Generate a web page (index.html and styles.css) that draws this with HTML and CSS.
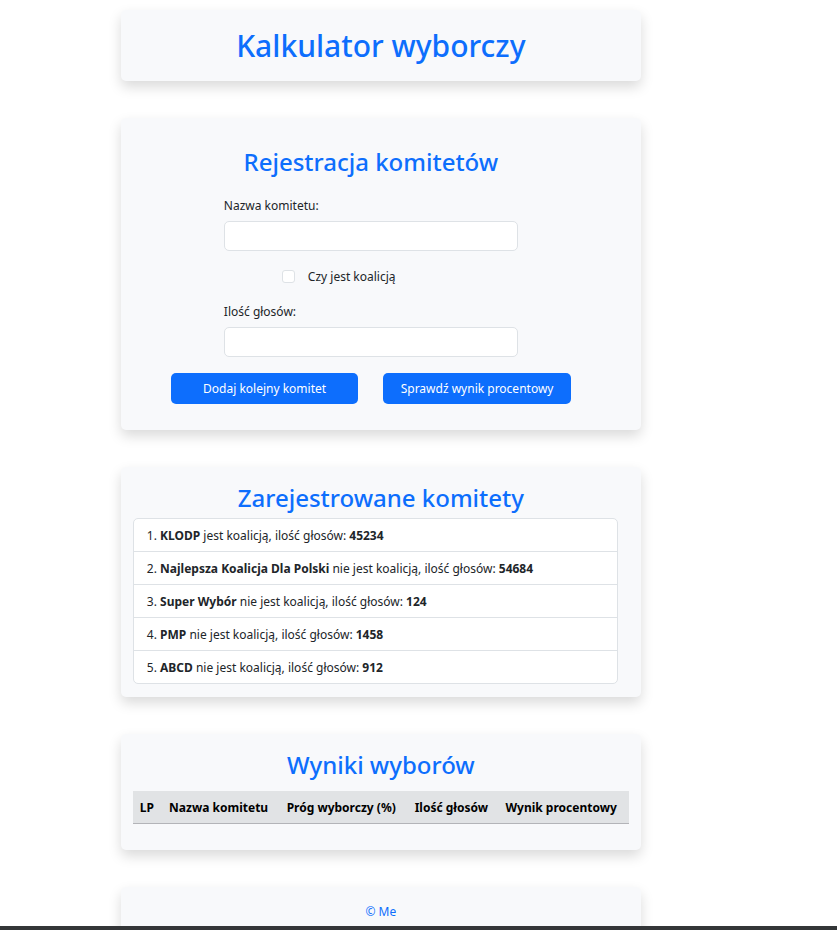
FILE: index.html
```html
<!DOCTYPE html>
<html lang="pl">
<head>
<meta charset="utf-8">
<meta name="viewport" content="width=device-width, initial-scale=1">
<title>Kalkulator wyborczy</title>
<link rel="stylesheet" href="styles.css">
</head>
<body>
<div class="viewport">
  <div class="page">
    <header class="card card-title">
      <h1>Kalkulator wyborczy</h1>
    </header>
    <main class="sections">
      <section class="card card-form">
        <h2>Rejestracja komitetów</h2>
        <form class="form">
          <div class="field">
            <label for="name">Nazwa komitetu:</label>
            <input class="control" type="text" id="name">
          </div>
          <div class="check">
            <input type="checkbox" id="coalition">
            <label for="coalition">Czy jest koalicją</label>
          </div>
          <div class="field">
            <label for="votes">Ilość głosów:</label>
            <input class="control" type="text" id="votes">
          </div>
          <div class="actions">
            <button type="button">Dodaj kolejny komitet</button>
            <button type="button">Sprawdź wynik procentowy</button>
          </div>
        </form>
      </section>
      <section class="card card-list">
        <h2>Zarejestrowane komitety</h2>
        <ol class="list">
          <li><strong>KLODP</strong> jest koalicją, ilość głosów: <strong>45234</strong></li>
          <li><strong>Najlepsza Koalicja Dla Polski</strong> nie jest koalicją, ilość głosów: <strong>54684</strong></li>
          <li><strong>Super Wybór</strong> nie jest koalicją, ilość głosów: <strong>124</strong></li>
          <li><strong>PMP</strong> nie jest koalicją, ilość głosów: <strong>1458</strong></li>
          <li><strong>ABCD</strong> nie jest koalicją, ilość głosów: <strong>912</strong></li>
        </ol>
      </section>
      <section class="card card-results">
        <h2>Wyniki wyborów</h2>
        <table>
          <thead>
            <tr><th>LP</th><th>Nazwa komitetu</th><th>Próg wyborczy (%)</th><th>Ilość głosów</th><th>Wynik procentowy</th></tr>
          </thead>
        </table>
      </section>
    </main>
    <footer class="card card-footer">© Me</footer>
  </div>
</div>
<div class="bottom-bar"></div>
</body>
</html>
```
FILE: styles.css
```css
* { box-sizing: border-box; }

body {
  margin: 0;
  height: 100vh;
  display: flex;
  flex-direction: column;
  background: #fff;
  color: #212529;
  font-family: "Segoe UI", "Noto Sans", sans-serif;
  font-size: 12px;
  line-height: 20px;
}

.viewport {
  flex: 1;
  min-height: 0;
  overflow-y: auto;
  scrollbar-width: none;
}

.bottom-bar {
  height: 4px;
  background: #343638;
}

.page {
  width: 91%;
  padding: 10px 0;
}

.page,
.sections {
  display: flex;
  flex-direction: column;
  align-items: center;
  gap: 37px;
}

.sections { width: 100%; }

.card {
  width: 100%;
  max-width: 520px;
  padding: 13px 12px;
  border-radius: 5px;
  background: #f8f9fb;
  box-shadow: 0 6px 13px rgba(0, 0, 0, 0.15);
}

h1,
h2 {
  margin: 0;
  color: #0d6efd;
  font-weight: 500;
  text-align: center;
}

h1 {
  font-size: 30px;
  line-height: 45px;
}

h2 {
  font-size: 24px;
  line-height: 36px;
}

.card-form { padding: 26px 32px 26px 12px; }

.form {
  display: flex;
  flex-direction: column;
  align-items: center;
  gap: 16px;
  padding: 16px 38px 0;
}

.field {
  display: flex;
  flex-direction: column;
  gap: 5px;
  width: 100%;
  max-width: 294px;
}

.control {
  width: 100%;
  height: 30px;
  padding: 5px 10px;
  border: 1px solid #dee2e6;
  border-radius: 5px;
  background: #fff;
  font: inherit;
}

.check {
  display: flex;
  align-items: center;
  gap: 13px;
  width: 100%;
  max-width: 178px;
}

.check label { line-height: 19px; }

.check input {
  appearance: none;
  width: 13px;
  height: 13px;
  margin: 0;
  border: 1px solid #dee2e6;
  border-radius: 3px;
  background: #fff;
}

.check input:checked { background: #0d6efd; }

.actions {
  display: flex;
  gap: 25px;
  width: 100%;
}

button {
  flex: 1;
  padding: 6px 10px 5px;
  border: 0;
  border-radius: 5px;
  background: #0d6efd;
  color: #fff;
  font: inherit;
  white-space: nowrap;
}

.list {
  margin: 2px 11px 0 0;
  padding: 0;
  list-style: none;
  counter-reset: item;
  border: 1px solid #dee2e6;
  border-radius: 5px;
  background: #fff;
}

.list li {
  padding: 7px 13px 5px;
  counter-increment: item;
}

.list li + li { border-top: 1px solid #dee2e6; }

.list li::before { content: counter(item) ". "; }

.card-results { padding-bottom: 26px; }

table {
  width: 100%;
  margin-top: 8px;
  border-collapse: collapse;
}

th {
  padding: 7px 7px 5px;
  border-bottom: 1px solid #b3b4b8;
  background: #e1e3e5;
  color: #000;
  text-align: left;
  white-space: nowrap;
}

.card-footer {
  min-height: 50px;
  padding-top: 15px;
  color: #0d6efd;
  text-align: center;
}
```
